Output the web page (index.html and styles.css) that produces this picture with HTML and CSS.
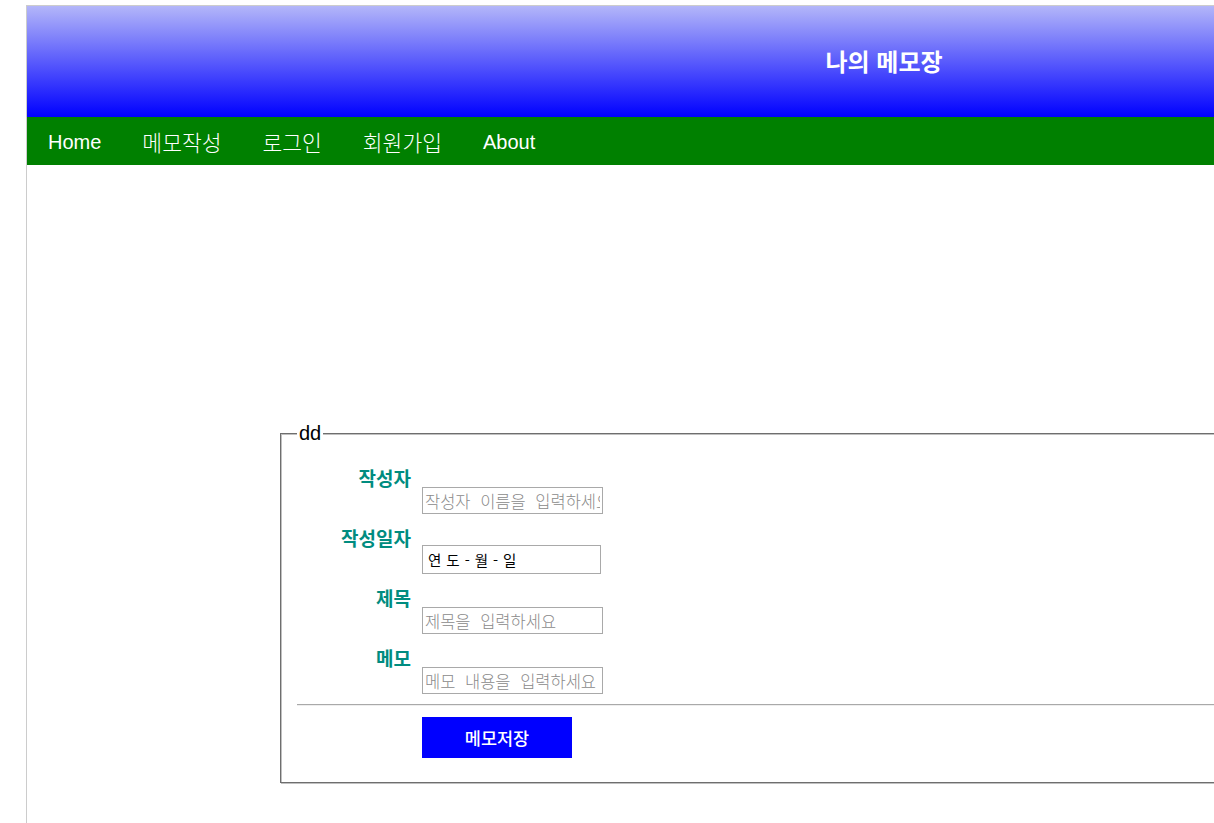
FILE: index.html
```html
<!DOCTYPE html>
<html lang="ko">
<head>
<meta charset="utf-8">
<title>나의 메모장</title>
<link rel="stylesheet" href="styles.css">
</head>
<body>
<div class="page">
  <header class="header">
    <h1 class="title">나의 메모장</h1>
  </header>
  <nav class="nav">
    <a class="nav-item" href="#">Home</a>
    <a class="nav-item ko" href="#">메모작성</a>
    <a class="nav-item ko" href="#">로그인</a>
    <a class="nav-item ko" href="#">회원가입</a>
    <a class="nav-item" href="#">About</a>
  </nav>
  <main class="main">
    <form class="memo-form">
      <fieldset class="box">
        <legend class="legend">dd</legend>
        <div class="rows">
          <div class="row">
            <label class="label" for="writer">작성자</label>
            <input class="field" id="writer" type="text" placeholder="작성자 이름을 입력하세요">
          </div>
          <div class="row">
            <label class="label" for="date">작성일자</label>
            <input class="field date" id="date" type="text" value="연도-월-일">
          </div>
          <div class="row">
            <label class="label" for="subject">제목</label>
            <input class="field" id="subject" type="text" placeholder="제목을 입력하세요">
          </div>
          <div class="row">
            <label class="label" for="memo">메모</label>
            <input class="field" id="memo" type="text" placeholder="메모 내용을 입력하세요">
          </div>
        </div>
        <hr class="divider">
        <button class="save" type="button">메모저장</button>
      </fieldset>
    </form>
  </main>
</div>
</body>
</html>
```

FILE: styles.css
```css
html, body {
  margin: 0;
  padding: 0;
  overflow: hidden;
  background: #ffffff;
}

body {
  font-family: "Liberation Sans", "Noto Sans CJK KR", sans-serif;
  font-size: 20px;
  color: #000;
}

.page {
  margin: 5px 0 0 26px;
  width: 1714px;
  min-height: 900px;
  border-top: 1px solid #cccccc;
  border-left: 1px solid #cccccc;
}

.header {
  height: 111px;
  box-sizing: border-box;
  padding-bottom: 2px;
  background: linear-gradient(to bottom, #b3b6f9 0%, #0000ff 100%);
  display: flex;
  align-items: center;
  justify-content: center;
}

.title {
  margin: 0;
  font-size: 24px;
  font-weight: bold;
  color: #ffffff;
  line-height: 1;
  font-family: "Noto Sans CJK KR", sans-serif;
}

.nav {
  height: 48px;
  background: #008000;
  display: flex;
  align-items: center;
  padding-left: 0.5px;
}

.nav-item {
  color: #ffffff;
  text-decoration: none;
  font-size: 20px;
  line-height: 48px;
  padding: 2px 20.5px 0;
}

.nav-item.ko {
  font-family: "Noto Sans CJK KR", sans-serif;
  font-size: 21.5px;
  font-weight: 300;
}

.main {
  padding-top: 256px;
}

.memo-form {
  margin: 0;
}

.box {
  margin: 0 0 0 253px;
  width: 1200px;
  padding: 8px 16px 13px;
  border: 1px solid #6e6e6e;
  box-shadow: inset 1px 1px 0 #c0c0c0, 1px 1px 0 #c0c0c0;
}

.legend {
  padding: 0 2px;
  font-size: 20px;
  line-height: 24px;
  background: #ffffff;
  position: relative;
}

.rows {
  margin-top: 13px;
  display: flex;
  flex-direction: column;
  gap: 12px;
}

.row {
  height: 48px;
  display: flex;
  align-items: flex-end;
  gap: 11px;
}

.label {
  align-self: flex-start;
  width: 114px;
  text-align: right;
  font-family: "Noto Sans CJK KR", sans-serif;
  font-size: 19px;
  font-weight: bold;
  line-height: 24px;
  color: #008c80;
}

.field {
  box-sizing: border-box;
  width: 181px;
  height: 27px;
  margin: 0;
  padding: 0 2px;
  border: 1px solid #a9a9a9;
  border-radius: 0;
  font-family: "Noto Sans CJK KR", sans-serif;
  font-size: 16.5px;
  word-spacing: 5px;
  color: #000;
  outline: none;
}

.field::placeholder {
  color: #8a8a8a;
  font-weight: 300;
}

.field.date {
  width: 179px;
  height: 29px;
  padding: 0 5px;
  font-size: 14.5px;
  letter-spacing: 5px;
  word-spacing: 0;
}

.divider {
  margin: 10px 0 0 0;
  border: 0;
  border-top: 1px solid #a9a9a9;
  border-bottom: 1px solid #eeeeee;
  height: 0;
}

.save {
  display: block;
  margin: 11px 0 11px 125px;
  width: 150px;
  height: 41px;
  border: 0;
  border-radius: 0;
  background: #0000ff;
  color: #ffffff;
  font-family: "Noto Sans CJK KR", sans-serif;
  font-size: 17.5px;
  font-weight: 500;
  padding: 0;
}
```
